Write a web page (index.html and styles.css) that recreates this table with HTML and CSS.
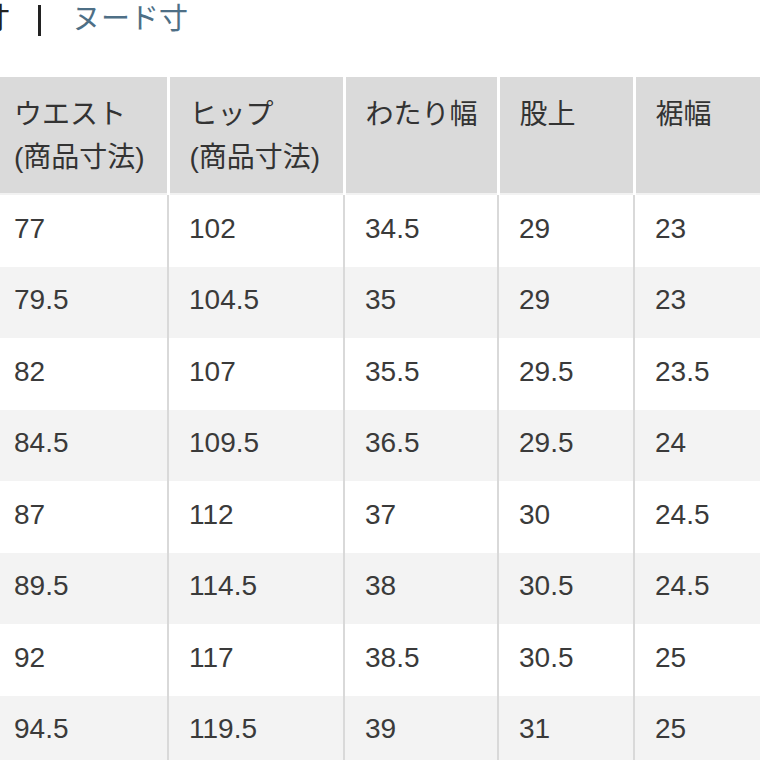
FILE: index.html
```html
<!DOCTYPE html>
<html lang="ja">
<head>
<meta charset="utf-8">
<link rel="stylesheet" href="styles.css">
</head>
<body>
<div class="page">
  <div class="tabs">
    <span class="tab tab-cut">寸</span>
    <span class="sep"></span>
    <span class="tab tab-link">ヌード寸</span>
  </div>
  <table class="size">
    <colgroup>
      <col class="c1"><col class="c2"><col class="c3"><col class="c4"><col class="c5">
    </colgroup>
    <thead>
      <tr>
        <th>ウエスト<br>(商品寸法)</th>
        <th>ヒップ<br>(商品寸法)</th>
        <th>わたり幅</th>
        <th>股上</th>
        <th>裾幅</th>
      </tr>
    </thead>
    <tbody>
      <tr><td>77</td><td>102</td><td>34.5</td><td>29</td><td>23</td></tr>
      <tr><td>79.5</td><td>104.5</td><td>35</td><td>29</td><td>23</td></tr>
      <tr><td>82</td><td>107</td><td>35.5</td><td>29.5</td><td>23.5</td></tr>
      <tr><td>84.5</td><td>109.5</td><td>36.5</td><td>29.5</td><td>24</td></tr>
      <tr><td>87</td><td>112</td><td>37</td><td>30</td><td>24.5</td></tr>
      <tr><td>89.5</td><td>114.5</td><td>38</td><td>30.5</td><td>24.5</td></tr>
      <tr><td>92</td><td>117</td><td>38.5</td><td>30.5</td><td>25</td></tr>
      <tr><td>94.5</td><td>119.5</td><td>39</td><td>31</td><td>25</td></tr>
    </tbody>
  </table>
</div>
</body>
</html>
```

FILE: styles.css
```css
html, body {
  margin: 0;
  padding: 0;
  background: #ffffff;
  overflow: hidden;
}
body {
  width: 760px;
  height: 760px;
  font-family: "Liberation Sans", "Noto Sans CJK JP", sans-serif;
  color: #333333;
}
.page {
  width: 760px;
  overflow: hidden;
}
.tabs {
  display: flex;
  align-items: center;
  height: 38px;
  margin-left: -19px;
  font-size: 29px;
  line-height: 36px;
}
.tab-cut {
  color: #222222;
}
.sep {
  width: 3px;
  height: 31px;
  background: #222222;
  margin: 2px 31px 0 28px;
}
.tab-link {
  color: #4e6f86;
}
.size {
  margin-top: 39px;
  margin-left: -6px;
  border-collapse: collapse;
  table-layout: fixed;
  width: 920px;
  font-size: 28px;
}
.c1 { width: 174px; }
.c2 { width: 176px; }
.c3 { width: 154px; }
.c4 { width: 136px; }
.c5 { width: 280px; }
.size th {
  background: #dadada;
  font-weight: normal;
  text-align: left;
  vertical-align: top;
  white-space: nowrap;
  line-height: 43px;
  padding: 16px 18px 14px 20px;
  height: 86px;
  border-left: 3px solid #ffffff;
  border-bottom: 2px solid #f2f2f2;
  color: #333333;
}
.size td {
  height: 67.5px;
  padding: 0 20px 4px 20px;
  line-height: 30px;
  vertical-align: middle;
  border-left: 2px solid #d9d9d9;
  color: #3a3a3a;
}
.size th:first-child,
.size td:first-child {
  border-left: none;
}
.size tbody tr:nth-child(even) td {
  background: #f3f3f3;
}
.size tbody tr:nth-child(odd) td {
  background: #ffffff;
}
```
